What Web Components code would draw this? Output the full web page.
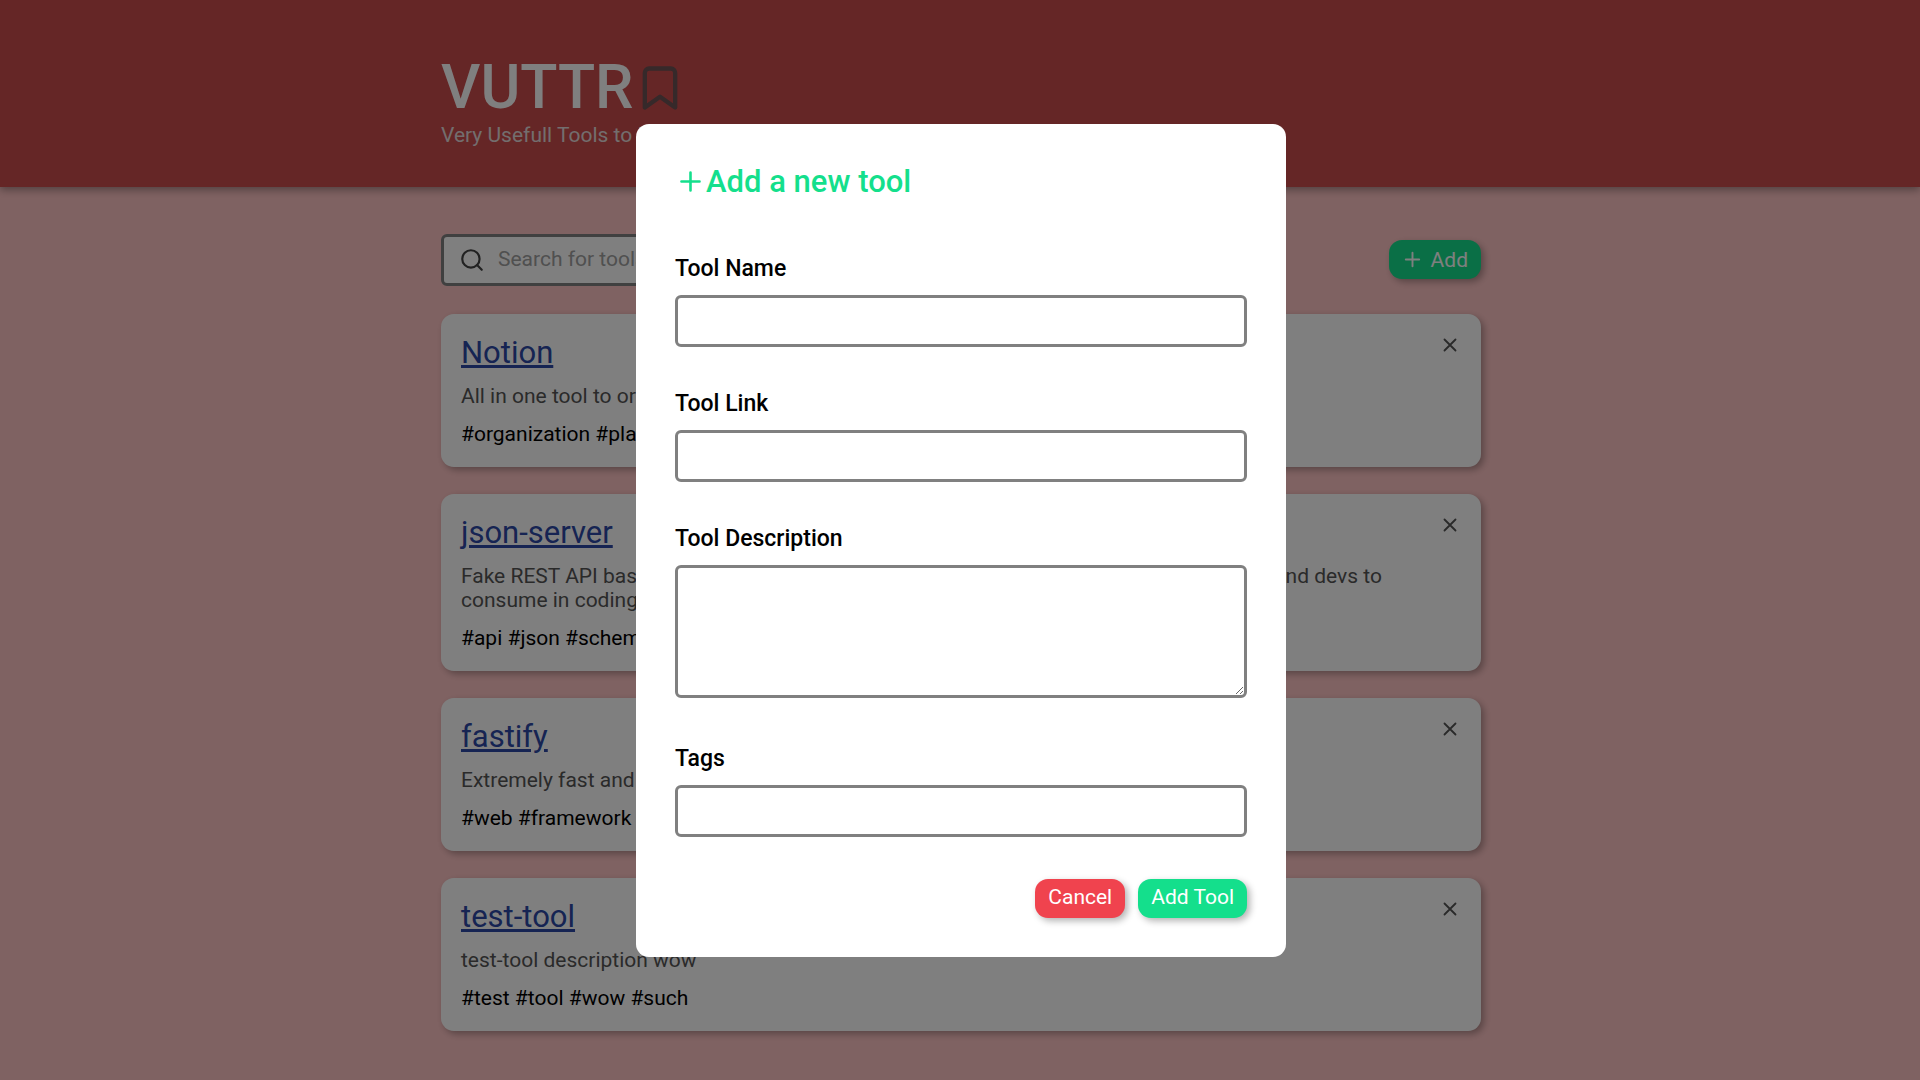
<!DOCTYPE html>
<html lang="en">
<head>
<meta charset="utf-8">
<title>VUTTR</title>
<style>
  body { margin: 0; min-height: 100vh; background: #ffc5c5; color: #000; font-family: Roboto, "Liberation Sans", sans-serif; font-size: 21px; line-height: 24px; }
</style>
</head>
<body>
<vuttr-app></vuttr-app>
<script>
const ICONS = {
  plus: '<path d="M12 5v14M5 12h14"/>',
  close: '<path d="M18 6L6 18M6 6l12 12"/>',
  search: '<circle cx="11" cy="11" r="8"/><path d="M21 21l-4.35-4.35"/>',
  bookmark: '<path d="M19 21l-7-5-7 5V5a2 2 0 0 1 2-2h10a2 2 0 0 1 2 2z"/>'
};

const define = (name, render) => customElements.define(name, class extends HTMLElement {
  connectedCallback() {
    if (this.shadowRoot) return;
    this.attachShadow({ mode: 'open' }).innerHTML = render(this);
  }
});

define('app-icon', el => `
  <style>
    :host { display: inline-flex; flex: none; width: 24px; height: 24px; }
    svg { width: 100%; height: 100%; fill: none; stroke: currentColor; stroke-width: 2; stroke-linecap: round; stroke-linejoin: round; }
  </style>
  <svg viewBox="0 0 24 24" aria-hidden="true">${ICONS[el.getAttribute('name')]}</svg>`);

define('app-button', () => `
  <style>
    :host { display: block; --button-color: #14df8c; }
    :host([danger]) { --button-color: #f0434e; }
    button { display: flex; align-items: center; gap: 7px; box-sizing: border-box; height: 39px; margin: 0; padding: 0 13px 3px; border: 0; border-radius: 13px; background: var(--button-color); color: #fff; font: inherit; box-shadow: 3px 3px 7px rgba(0, 0, 0, .3); cursor: pointer; }
    :host([with-icon]) button { padding: 0 13px 0 12px; }
  </style>
  <button type="button"><slot></slot></button>`);

define('app-header', () => `
  <style>
    :host { display: block; background: #cb4c4c; color: #fff; box-shadow: 0 3px 8px rgba(0, 0, 0, .35); }
    .inner { box-sizing: border-box; width: 1042px; max-width: 100%; margin: 0 auto; padding: 52px 0 40px 2px; }
    h1 { display: flex; align-items: center; margin: 0; font-size: 61px; line-height: 71px; font-weight: 500; }
    app-icon { width: 52px; height: 52px; color: #6c5254; }
    p { margin: 0; color: #e6dcdc; }
  </style>
  <div class="inner">
    <h1>VUTTR<app-icon name="bookmark"></app-icon></h1>
    <p>Very Usefull Tools to Remember</p>
  </div>`);

define('search-box', () => `
  <style>
    :host { display: block; width: 416px; }
    label { display: flex; align-items: center; gap: 13px; box-sizing: border-box; height: 52px; padding: 0 15px; border: 3px solid #808080; border-radius: 6px; background: #fff; color: #444; }
    app-icon { width: 26px; height: 26px; }
    input { flex: 1; min-width: 0; padding: 0 0 2px; border: 0; outline: 0; background: none; font: inherit; }
    input::placeholder { color: #a0a0a0; opacity: 1; }
  </style>
  <label><app-icon name="search"></app-icon><input type="text" placeholder="Search for tools" aria-label="Search for tools"></label>`);

define('tool-card', el => `
  <style>
    :host { display: flex; justify-content: space-between; box-sizing: border-box; padding: 20px 20px 19px; border-radius: 13px; background: #fff; box-shadow: 3px 3px 7px rgba(0, 0, 0, .3); }
    .body { max-width: 930px; }
    h2 { margin: 0 0 13px; font-size: 31px; line-height: 37px; font-weight: 400; }
    a { color: #2c48a6; }
    p { margin: 0 0 13px; color: #555; }
    .tags { margin: 0; line-height: 27px; color: #000; }
    button { display: flex; align-self: flex-start; margin: 0; padding: 0; border: 0; background: none; color: #555; cursor: pointer; }
    app-icon { width: 22px; height: 22px; }
  </style>
  <div class="body">
    <h2><a href="#">${el.getAttribute('name')}</a></h2>
    <p><slot></slot></p>
    <div class="tags">${el.getAttribute('tags')}</div>
  </div>
  <button type="button" aria-label="Remove ${el.getAttribute('name')}"><app-icon name="close"></app-icon></button>`);

define('form-field', el => `
  <style>
    :host { display: block; }
    label { display: block; margin-bottom: 13px; font-size: 23px; line-height: 26px; font-weight: 500; }
    input, textarea { display: block; box-sizing: border-box; width: 100%; height: 52px; margin: 0; padding: 8px 12px; border: 3px solid #808080; border-radius: 6px; background: #fff; font: inherit; }
    textarea { height: 133px; margin-bottom: 4px; resize: both; }
  </style>
  <label for="control">${el.getAttribute('label')}</label>
  ${el.hasAttribute('multiline') ? '<textarea id="control"></textarea>' : '<input id="control" type="text">'}`);

define('tool-modal', () => `
  <style>
    :host { position: fixed; inset: 0; display: flex; align-items: center; justify-content: center; padding-left: 2px; background: rgba(0, 0, 0, .5); }
    form { box-sizing: border-box; width: 650px; max-width: 100%; padding: 39px; border-radius: 13px; background: #fff; }
    h2 { display: flex; align-items: center; margin: 0 0 56px; color: #14df8c; font-size: 31px; line-height: 37px; font-weight: 500; }
    h2 app-icon { width: 31px; height: 31px; }
    .fields { display: flex; flex-direction: column; gap: 44px; }
    .actions { display: flex; justify-content: flex-end; gap: 13px; margin-top: 42px; }
  </style>
  <form role="dialog" aria-modal="true" aria-labelledby="title">
    <h2 id="title"><app-icon name="plus"></app-icon>Add a new tool</h2>
    <div class="fields">
      <form-field label="Tool Name"></form-field>
      <form-field label="Tool Link"></form-field>
      <form-field label="Tool Description" multiline></form-field>
      <form-field label="Tags"></form-field>
    </div>
    <div class="actions">
      <app-button danger>Cancel</app-button>
      <app-button>Add Tool</app-button>
    </div>
  </form>`);

define('vuttr-app', () => `
  <style>
    :host { display: block; }
    main { box-sizing: border-box; width: 1042px; max-width: 100%; margin: 0 auto; padding: 47px 0 27px 2px; }
    .toolbar { display: flex; align-items: center; justify-content: space-between; margin-bottom: 28px; }
    .toolbar app-icon { width: 23px; height: 23px; }
    .toolbar app-button { padding-bottom: 1px; }
    .list { display: flex; flex-direction: column; gap: 27px; }
  </style>
  <app-header></app-header>
  <main>
    <div class="toolbar">
      <search-box></search-box>
      <app-button with-icon><app-icon name="plus"></app-icon>Add</app-button>
    </div>
    <div class="list">
      <tool-card name="Notion" tags="#organization #planning #collaboration #writing #calendar">All in one tool to organize teams and ideas. Write, plan, collaborate, and get organized.</tool-card>
      <tool-card name="json-server" tags="#api #json #schema #node #github #rest">Fake REST API based on a json schema. Useful for mocking and creating APIs for front-end devs to consume in coding challenges.</tool-card>
      <tool-card name="fastify" tags="#web #framework #node #http2 #https #localhost">Extremely fast and simple, low-overhead web framework for NodeJS. Supports HTTP2.</tool-card>
      <tool-card name="test-tool" tags="#test #tool #wow #such">test-tool description wow</tool-card>
    </div>
  </main>
  <tool-modal></tool-modal>`);
</script>
</body>
</html>
